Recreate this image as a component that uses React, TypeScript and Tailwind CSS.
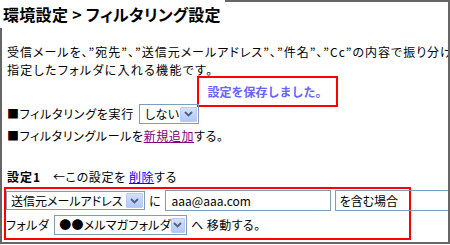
import React from "react";

const Chevron = () => (
  <svg width="9" height="6" viewBox="0 0 9 6">
    <path d="M1 1 L4.5 4.5 L8 1" stroke="#4d6185" strokeWidth="1.8" fill="none" />
  </svg>
);

const DropBtn = () => (
  <div className="w-[17px] h-[15px] mr-[1px] flex items-center justify-center rounded-[1px] border border-[#b8cbf6] bg-gradient-to-b from-[#d4e1fc] to-[#b3c7f5]">
    <Chevron />
  </div>
);

export default function App() {
  return (
    <div className="w-[450px] h-[245px] bg-white overflow-hidden text-[12px] text-black font-['Noto_Sans_CJK_JP',sans-serif] [font-feature-settings:'palt']">
      <div className="w-[450px] h-[244px] flex flex-col border-r-2 border-b-2 border-[#666666]">
        <div className="h-[28px] flex shrink-0">
          <div className="w-[225px] pl-[3px] flex items-center text-[16px] font-bold leading-none whitespace-nowrap tracking-[0.3px]">
            環境設定 &gt; フィルタリング設定
          </div>
          <div className="flex-1 border-t-2 border-[#666666]" />
        </div>
        <div className="flex-1 border-l-2 border-[#666666] pl-[5px] overflow-hidden min-w-0">
          <div className="h-[48px] pt-[15px] leading-[18px] whitespace-nowrap">
            <div className="tracking-[1px]">受信メールを、”宛先”、”送信元メールアドレス”、”件名”、”Cc”の内容で振り分けて、</div>
            <div className="tracking-[1.3px]">指定したフォルダに入れる機能です。</div>
          </div>
          <div className="ml-[190px] w-[141px] h-[31px] border-2 border-[#ff0000] flex items-center justify-center font-bold text-[#6666ff] [font-feature-settings:normal] whitespace-nowrap">
            設定を保存しました。
          </div>
          <div className="-mt-[3px] h-[20px] flex items-center whitespace-nowrap">
            <span className="tracking-[0.7px]">■フィルタリングを実行</span>
            <div className="ml-[5px] w-[60px] h-[20px] border border-[#7f9db9] flex items-center justify-between pl-[5px] shrink-0">
              <span className="tracking-[0.5px]">しない</span>
              <DropBtn />
            </div>
          </div>
          <div className="mt-[3px] h-[18px] leading-[18px] whitespace-nowrap tracking-[0.6px]">
            ■フィルタリングルールを
            <a className="text-[#800080] underline">新規追加</a>
            する。
          </div>
          <div className="mt-[23px] h-[18px] leading-[18px] whitespace-nowrap">
            <span className="font-bold tracking-[1px]">設定1</span>
            <span className="ml-[12px] tracking-[0.6px]">←この設定を </span>
            <a className="text-[#0000ff] underline tracking-[0.6px]">削除</a>
            <span className="tracking-[0.6px]">する</span>
          </div>
          <div className="-ml-[3px] mt-[1px] w-[407px] h-[53px] border-2 border-[#ff0000] pt-[1px]">
            <div className="h-[21px] flex items-center whitespace-nowrap">
              <div className="w-[139px] h-[19px] border border-[#7f9db9] flex items-center justify-between pl-[4px] shrink-0">
                <span>送信元メールアドレス</span>
                <DropBtn />
              </div>
              <span className="ml-[4px]">に</span>
              <div className="ml-[4px] w-[166px] h-[21px] border border-[#7f9db9] flex items-center pl-[6px] shrink-0">
                aaa@aaa.com
              </div>
              <div className="ml-[4px] w-[140px] h-[21px] border border-[#7f9db9] flex items-center pl-[4px] shrink-0">
                を含む場合
              </div>
            </div>
            <div className="mt-[4px] h-[20px] flex items-center whitespace-nowrap">
              <span className="tracking-[0.4px]">フォルダ</span>
              <div className="ml-[5px] w-[133px] h-[20px] border border-[#7f9db9] flex items-center justify-between pl-[4px] shrink-0">
                <span className="tracking-[0.2px]">●●メルマガフォルダ</span>
                <DropBtn />
              </div>
              <span className="ml-[4px] tracking-[0.4px]">へ 移動する。</span>
            </div>
          </div>
        </div>
      </div>
    </div>
  );
}
